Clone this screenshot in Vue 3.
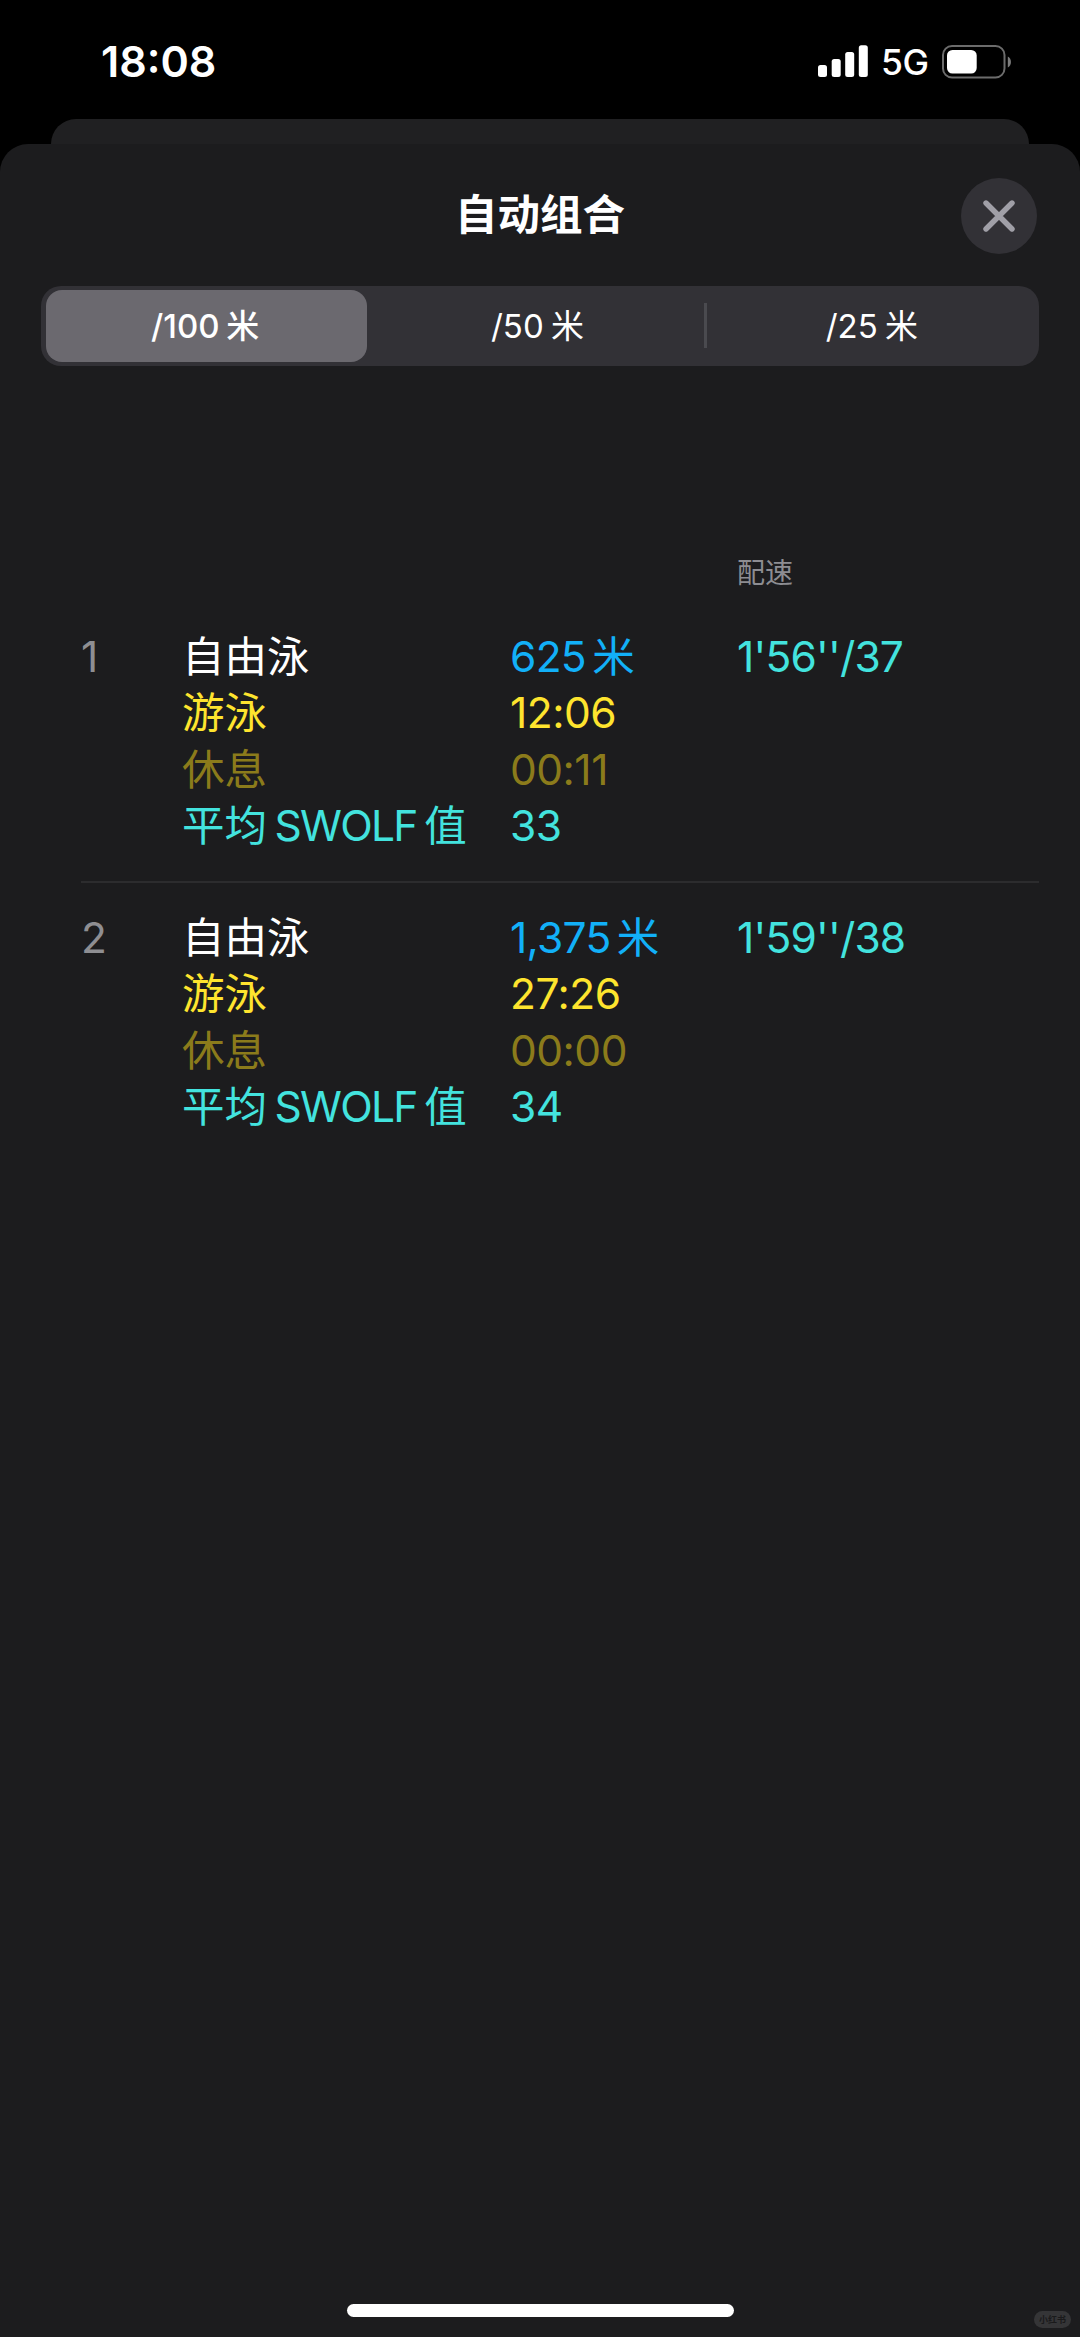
<template>
  <div class="screen">
    <header class="status-bar">
      <span class="clock">18:08</span>
      <div class="status-icons">
        <svg class="signal" width="50" height="33" viewBox="0 0 50 33" fill="#fff">
          <rect x="0" y="20" width="9" height="12" rx="2.5" />
          <rect x="13.7" y="14" width="9" height="18" rx="2.5" />
          <rect x="27.2" y="7" width="9" height="25" rx="2.5" />
          <rect x="40.8" y="0.3" width="9" height="31.7" rx="2.5" />
        </svg>
        <span class="network">5G</span>
        <svg class="battery" width="70" height="34" viewBox="0 0 70 34">
          <rect x="1" y="1" width="61.5" height="31.5" rx="9" fill="none" stroke="#6c6c6c" stroke-width="2" />
          <rect x="5" y="5" width="29.7" height="23.5" rx="5.5" fill="#fff" />
          <path d="M65.8 11.5 C70 13.5 70 20.5 65.8 22.5 Z" fill="#7c7c7c" />
        </svg>
      </div>
    </header>

    <div class="back-card"></div>

    <main class="sheet">
      <div class="title-bar">
        <h1>自动组合</h1>
        <button class="close-btn" aria-label="关闭">
          <svg width="32" height="32" viewBox="0 0 32 32">
            <path d="M3 3 L29 29 M29 3 L3 29" stroke="#a09fa7" stroke-width="5.4" stroke-linecap="round" />
          </svg>
        </button>
      </div>

      <div class="segments">
        <button
            v-for="(item, index) in distances"
            :key="item"
            class="segment"
            :class="{ active: index === current, divided: index > 0 && index !== current && index - 1 !== current }"
            @click="current = index"
        >
          /{{ item }} 米
        </button>
      </div>

      <div class="grid list-head">
        <span class="pace-title">配速</span>
      </div>

      <section v-for="(set, index) in sets" :key="index" class="grid set">
        <div class="number">{{ index + 1 }}</div>
        <div class="labels">
          <p class="stroke">{{ set.stroke }}</p>
          <p class="swim">游泳</p>
          <p class="rest">休息</p>
          <p class="swolf">平均 <span class="latin">SWOLF</span> 值</p>
        </div>
        <div class="values">
          <p class="distance">{{ set.distance }} 米</p>
          <p class="swim">{{ set.swim }}</p>
          <p class="rest">{{ set.rest }}</p>
          <p class="swolf">{{ set.swolf }}</p>
        </div>
        <div class="pace">{{ set.pace }}</div>
      </section>

      <div class="home-indicator"></div>
    </main>

    <div class="watermark">小红书</div>
  </div>
</template>

<script setup>
import { ref } from 'vue';

const distances = [100, 50, 25];
const current = ref(0);

const sets = [
  { stroke: '自由泳', distance: '625', swim: '12:06', rest: '00:11', swolf: 33, pace: "1'56''/37" },
  { stroke: '自由泳', distance: '1,375', swim: '27:26', rest: '00:00', swolf: 34, pace: "1'59''/38" },
];
</script>

<style>
body {
  margin: 0;
  background: #000;
}
</style>

<style scoped>
.screen {
  position: relative;
  display: flex;
  flex-direction: column;
  width: 1080px;
  height: 2337px;
  overflow: hidden;
  background: #000;
  color: #fff;
  font-family: Inter, "Noto Sans CJK SC", sans-serif;
}

p,
h1 {
  margin: 0;
}

button {
  border: none;
  padding: 0;
  background: none;
  color: inherit;
  font-family: inherit;
}

.status-bar {
  display: flex;
  justify-content: space-between;
  box-sizing: border-box;
  height: 119px;
  padding: 0 68px 0 101px;
}

.clock {
  margin-top: 35px;
  font-size: 43px;
  line-height: 52px;
  font-weight: 600;
}

.status-icons {
  display: flex;
  margin-top: 45px;
}

.network {
  box-sizing: border-box;
  width: 60px;
  padding-left: 13px;
  font-size: 35.5px;
  line-height: 36px;
  font-weight: 500;
  letter-spacing: -0.5px;
}

.battery {
  margin-left: 14px;
}

.back-card {
  flex: none;
  height: 25px;
  margin: 0 51px;
  border-radius: 25px 25px 0 0;
  background: #202022;
}

.sheet {
  flex: 1;
  display: flex;
  flex-direction: column;
  border-radius: 28px 28px 0 0;
  background: #1c1c1e;
}

.title-bar {
  display: grid;
  grid-template-columns: 1fr auto 1fr;
  align-items: center;
  height: 142px;
  padding: 0 43px;
}

.title-bar h1 {
  grid-column: 2;
  font-size: 42.5px;
  line-height: 60px;
  font-weight: 600;
}

.close-btn {
  display: flex;
  align-items: center;
  justify-content: center;
  justify-self: end;
  width: 76px;
  height: 76px;
  margin-top: 2px;
  border-radius: 50%;
  background: #323136;
}

.segments {
  display: grid;
  grid-template-columns: repeat(3, 1fr);
  box-sizing: border-box;
  height: 80px;
  margin: 0 41px;
  padding: 4px 5px;
  border-radius: 20px;
  background: #323136;
}

.segment {
  position: relative;
  padding: 0 5px 4px 0;
  border-radius: 16px;
  font-size: 33px;
  font-weight: 400;
  word-spacing: -2px;
}

.segment.active {
  margin-right: 8px;
  padding-right: 3px;
  background: #6b696f;
  font-weight: 500;
}

.segment.divided {
  padding: 0 0 4px 5px;
}

.segment.divided::before {
  content: "";
  position: absolute;
  top: 13px;
  left: -1px;
  width: 3px;
  height: 45px;
  background: #4a4a4f;
}

.grid {
  display: grid;
  grid-template-columns: 101px 328px 227px 1fr;
  margin: 0 41px 0 81px;
}

.list-head {
  margin-top: 187px;
  height: 47px;
}

.pace-title {
  grid-column: 4;
  font-size: 28px;
  line-height: 40px;
  color: #8d8d92;
}

.set {
  box-sizing: border-box;
  height: 281px;
  padding-top: 29px;
  font-size: 42.5px;
  line-height: 56.3px;
  white-space: nowrap;
}

.set + .set {
  border-top: 2px solid #2c2c2e;
  padding-top: 27px;
}

.labels {
  word-spacing: -4.5px;
}

.latin {
  letter-spacing: -1.7px;
}

.values {
  letter-spacing: -0.5px;
}

.number {
  color: #8e8e92;
}

.swim {
  color: #fee42e;
}

.rest {
  color: #8b7b1b;
}

.distance {
  color: #12b0f8;
  letter-spacing: -0.7px;
  word-spacing: -5px;
}

.swolf,
.pace {
  color: #43e3de;
}

.pace {
  letter-spacing: -0.8px;
}

.home-indicator {
  width: 387px;
  height: 13px;
  margin: auto auto 20px;
  border-radius: 7px;
  background: #fff;
}

.watermark {
  position: absolute;
  right: 9px;
  bottom: 9px;
  width: 37px;
  height: 17px;
  border-radius: 9px;
  background: #353537;
  color: #1a1a1b;
  font-size: 9px;
  line-height: 17px;
  font-weight: 700;
  text-align: center;
}
</style>
